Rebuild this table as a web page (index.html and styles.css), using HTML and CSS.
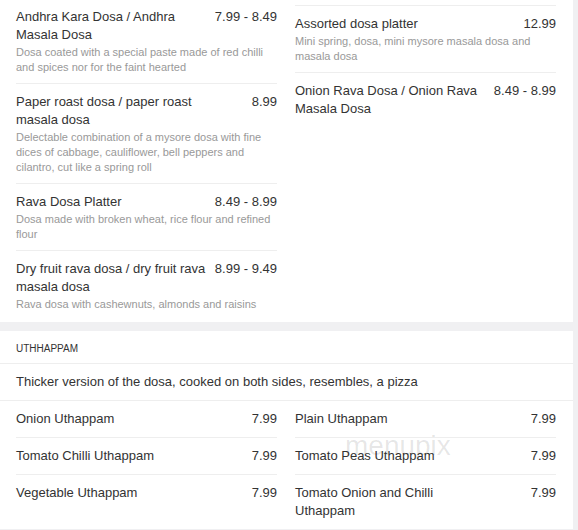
FILE: index.html
```html
<!DOCTYPE html>
<html lang="en">
<head>
    <meta charset="UTF-8">
    <meta name="viewport" content="width=device-width, initial-scale=1.0">
    <title>Dosa &amp; Uthappam Menu</title>
    <link rel="stylesheet" href="styles.css">
</head>
<body>
    <div class="menu">
        <section class="card card-top">
            <div class="columns">
                <div class="column">
                    <div class="item item-first">
                        <div class="item-row">
                            <span class="item-name">Andhra Kara Dosa / Andhra Masala Dosa</span>
                            <span class="item-price">7.99 - 8.49</span>
                        </div>
                        <p class="item-desc">Dosa coated with a special paste made of red chilli and spices nor for the faint hearted</p>
                    </div>
                    <div class="item">
                        <div class="item-row">
                            <span class="item-name">Paper roast dosa / paper roast masala dosa</span>
                            <span class="item-price">8.99</span>
                        </div>
                        <p class="item-desc">Delectable combination of a mysore dosa with fine dices of cabbage, cauliflower, bell peppers and cilantro, cut like a spring roll</p>
                    </div>
                    <div class="item">
                        <div class="item-row">
                            <span class="item-name">Rava Dosa Platter</span>
                            <span class="item-price">8.49 - 8.99</span>
                        </div>
                        <p class="item-desc">Dosa made with broken wheat, rice flour and refined flour</p>
                    </div>
                    <div class="item">
                        <div class="item-row">
                            <span class="item-name">Dry fruit rava dosa / dry fruit rava masala dosa</span>
                            <span class="item-price">8.99 - 9.49</span>
                        </div>
                        <p class="item-desc">Rava dosa with cashewnuts, almonds and raisins</p>
                    </div>
                </div>
                <div class="column column-offset">
                    <div class="item">
                        <div class="item-row">
                            <span class="item-name">Assorted dosa platter</span>
                            <span class="item-price">12.99</span>
                        </div>
                        <p class="item-desc">Mini spring, dosa, mini mysore masala dosa and masala dosa</p>
                    </div>
                    <div class="item">
                        <div class="item-row">
                            <span class="item-name">Onion Rava Dosa / Onion Rava Masala Dosa</span>
                            <span class="item-price">8.49 - 8.99</span>
                        </div>
                    </div>
                </div>
            </div>
        </section>

        <section class="card card-simple">
            <h2 class="card-title">UTHHAPPAM</h2>
            <p class="card-intro">Thicker version of the dosa, cooked on both sides, resembles, a pizza</p>
            <div class="columns">
                <div class="column">
                    <div class="item">
                        <div class="item-row">
                            <span class="item-name">Onion Uthappam</span>
                            <span class="item-price">7.99</span>
                        </div>
                    </div>
                    <div class="item">
                        <div class="item-row">
                            <span class="item-name">Tomato Chilli Uthappam</span>
                            <span class="item-price">7.99</span>
                        </div>
                    </div>
                    <div class="item">
                        <div class="item-row">
                            <span class="item-name">Vegetable Uthappam</span>
                            <span class="item-price">7.99</span>
                        </div>
                    </div>
                </div>
                <div class="column">
                    <div class="item">
                        <div class="item-row">
                            <span class="item-name">Plain Uthappam</span>
                            <span class="item-price">7.99</span>
                        </div>
                    </div>
                    <div class="item">
                        <div class="item-row">
                            <span class="item-name">Tomato Peas Uthappam</span>
                            <span class="item-price">7.99</span>
                        </div>
                    </div>
                    <div class="item">
                        <div class="item-row">
                            <span class="item-name">Tomato Onion and Chilli Uthappam</span>
                            <span class="item-price">7.99</span>
                        </div>
                    </div>
                </div>
            </div>
            <span class="watermark">menupix</span>
        </section>
    </div>
</body>
</html>
```

FILE: styles.css
```css
body {
    margin: 0;
    background-color: #f0f0f2;
    color: #333;
    font-family: "Liberation Sans", Arial, sans-serif;
}

.menu {
    width: 573px;
}

.card {
    position: relative;
    background-color: #fff;
    margin-bottom: 9px;
}

.card-top {
    padding-bottom: 2px;
}

.columns {
    display: flex;
    gap: 18px;
    padding: 0 17px 0 16px;
}

.column {
    flex: 1;
    min-width: 0;
}

.column-offset {
    padding-top: 5px;
}

.column-offset .item:first-child {
    border-top: 1px solid #eee;
}

.item {
    padding: 9px 0 8px;
    border-bottom: 1px solid #eee;
}

.item:last-child {
    border-bottom: none;
}

.card-simple .item {
    padding-bottom: 9px;
}

.item-first {
    padding-top: 8px;
}

.item-row {
    display: flex;
    align-items: flex-start;
}

.item-name {
    flex: 1;
    font-size: 13px;
    line-height: 18px;
}

.item-price {
    width: 68px;
    flex-shrink: 0;
    text-align: right;
    font-size: 13px;
    line-height: 18px;
    white-space: nowrap;
}

.item-desc {
    margin: 1px 0 0;
    font-size: 11px;
    line-height: 15px;
    color: #999;
}

.card-title {
    margin: 0;
    padding: 12px 16px 8px;
    font-size: 10px;
    line-height: 12px;
    font-weight: normal;
    color: #333;
    border-bottom: 1px solid #eee;
}

.card-intro {
    margin: 0;
    padding: 9px 16px;
    font-size: 13px;
    line-height: 18px;
    border-bottom: 1px solid #eee;
}

.watermark {
    position: absolute;
    left: 345px;
    top: 100px;
    font-size: 28px;
    line-height: 30px;
    color: rgba(0, 0, 0, 0.1);
    pointer-events: none;
}
```
